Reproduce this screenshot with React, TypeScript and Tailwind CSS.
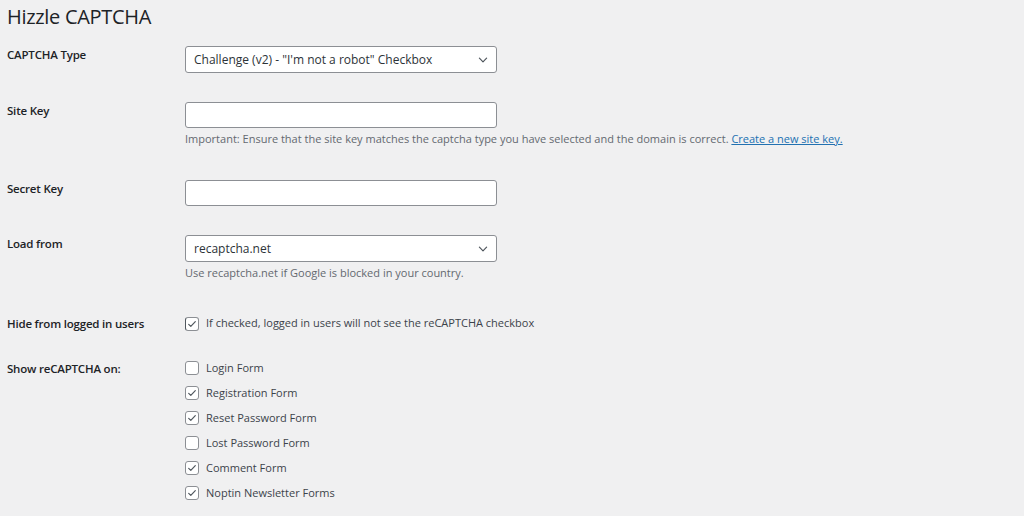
import React from "react";

const font = { fontFamily: '"Open Sans", "Noto Sans", sans-serif' };

const Chevron = () => (
  <svg className="absolute right-[7px] top-1/2 -translate-y-1/2 w-[12px] h-[12px]" viewBox="0 0 20 20" fill="none">
    <path d="M4 7l6 6 6-6" stroke="#50575e" strokeWidth="2" strokeLinecap="round" strokeLinejoin="round" />
  </svg>
);

const Select = ({ value }: { value: string }) => (
  <div className="relative w-[312px] h-[27px] bg-white border border-[#8c8f94] rounded-[3px] flex items-center pl-[8px] text-[12px] text-[#2c3338]">
    {value}
    <Chevron />
  </div>
);

const Input = () => <div className="w-[312px] h-[26px] bg-white border border-[#8c8f94] rounded-[3px]" />;

const Checkbox = ({ checked, focus }: { checked: boolean; focus?: boolean }) => (
  <div
    className={
      "w-[14px] h-[14px] bg-white border border-[#8c8f94] rounded-[3px] flex items-center justify-center shrink-0 " +
      (focus ? "border-l-[#50575e]" : "")
    }
  >
    {checked && (
      <svg viewBox="0 0 20 20" className="w-[12px] h-[12px]" fill="none">
        <path d="M4.5 10.5l3.5 3.5 7.5-8" stroke="#50575e" strokeWidth="2" strokeLinecap="round" strokeLinejoin="round" />
      </svg>
    )}
  </div>
);

const Label = ({ children }: { children: React.ReactNode }) => (
  <div className="w-[178px] shrink-0 text-[11.5px] leading-[17px] font-semibold text-[#1d2327] tracking-[-0.2px]">{children}</div>
);

const Desc = ({ children }: { children: React.ReactNode }) => (
  <p className="mt-[3px] text-[11px] leading-[16px] text-[#646970]">{children}</p>
);

const forms = [
  { name: "Login Form", checked: false },
  { name: "Registration Form", checked: true },
  { name: "Reset Password Form", checked: true },
  { name: "Lost Password Form", checked: false },
  { name: "Comment Form", checked: true },
  { name: "Noptin Newsletter Forms", checked: true },
];

export default function App() {
  return (
    <div className="min-h-screen bg-[#f0f0f1] px-[7px] pt-[3px]" style={font}>
      <h1 className="text-[20px] leading-[28px] font-normal text-[#1d2327] tracking-[-0.3px]">Hizzle CAPTCHA</h1>

      {/* CAPTCHA Type */}
      <div className="flex mt-[15px]">
        <Label>CAPTCHA Type</Label>
        <Select value={'Challenge (v2) - "I\'m not a robot" Checkbox'} />
      </div>

      {/* Site Key */}
      <div className="flex mt-[29px]">
        <Label>Site Key</Label>
        <div>
          <Input />
          <Desc>
            Important: Ensure that the site key matches the captcha type you have selected and the domain is correct.{" "}
            <a href="#" className="text-[#2271b1] underline">Create a new site key.</a>
          </Desc>
        </div>
      </div>

      {/* Secret Key */}
      <div className="flex mt-[33px]">
        <Label>Secret Key</Label>
        <Input />
      </div>

      {/* Load from */}
      <div className="flex mt-[29px]">
        <Label>Load from</Label>
        <div>
          <Select value="recaptcha.net" />
          <Desc>Use recaptcha.net if Google is blocked in your country.</Desc>
        </div>
      </div>

      {/* Hide from logged in users */}
      <div className="flex items-center mt-[34px]">
        <Label>Hide from logged in users</Label>
        <label className="flex items-center gap-[7px] text-[11px] text-[#3c434a]">
          <Checkbox checked focus />
          If checked, logged in users will not see the reCAPTCHA checkbox
        </label>
      </div>

      {/* Show reCAPTCHA on */}
      <div className="flex mt-[28px]">
        <Label>Show reCAPTCHA on:</Label>
        <div className="flex flex-col gap-[11px] pt-[1px]">
          {forms.map((f) => (
            <label key={f.name} className="flex items-center gap-[7px] h-[14px] text-[11px] text-[#3c434a]">
              <Checkbox checked={f.checked} />
              {f.name}
            </label>
          ))}
        </div>
      </div>
    </div>
  );
}
